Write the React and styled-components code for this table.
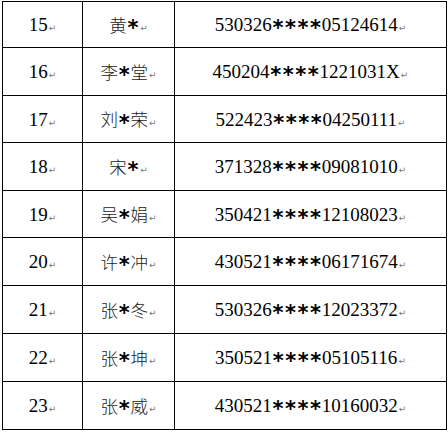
import styled, { createGlobalStyle } from "styled-components";

const GlobalStyle = createGlobalStyle`
  html, body {
    margin: 0;
    padding: 0;
    background: #ffffff;
  }
`;

const rows = [
  { no: "15", name: ["黄", ""], pre: "530326", post: "05124614", h: 46 },
  { no: "16", name: ["李", "堂"], pre: "450204", post: "1221031X", h: 48 },
  { no: "17", name: ["刘", "荣"], pre: "522423", post: "04250111", h: 47 },
  { no: "18", name: ["宋", ""], pre: "371328", post: "09081010", h: 48 },
  { no: "19", name: ["吴", "娟"], pre: "350421", post: "12108023", h: 47 },
  { no: "20", name: ["许", "冲"], pre: "430521", post: "06171674", h: 48 },
  { no: "21", name: ["张", "冬"], pre: "530326", post: "12023372", h: 48 },
  { no: "22", name: ["张", "坤"], pre: "350521", post: "05105116", h: 48 },
  { no: "23", name: ["张", "威"], pre: "430521", post: "10160032", h: 48 },
];

const Stars = ({ n }) =>
  Array.from({ length: n }, (_, i) => <Star key={i}>*</Star>);

function App() {
  return (
    <>
      <GlobalStyle />
      <Table>
        {rows.map(r => (
          <Row key={r.no} style={{ height: r.h }}>
            <Cell>
              <Digits>{r.no}</Digits>
              <Mark>↵</Mark>
            </Cell>
            <Cell>
              <Han>{r.name[0]}</Han>
              <Stars n={1} />
              <Han>{r.name[1]}</Han>
              <Mark>↵</Mark>
            </Cell>
            <Cell>
              <Digits>{r.pre}</Digits>
              <Stars n={4} />
              <Digits>{r.post}</Digits>
              <Mark>↵</Mark>
            </Cell>
          </Row>
        ))}
      </Table>
    </>
  );
}
export default App;

const Table = styled.div`
  width: 445px;
  margin: 1px 0 0 2px;
  border-top: 1px solid #000;
  border-left: 1px solid #000;
  box-sizing: border-box;
`;

const Row = styled.div`
  display: grid;
  grid-template-columns: 80px 92px 272px;
`;

const Cell = styled.div`
  box-sizing: border-box;
  border-right: 1px solid #000;
  border-bottom: 1px solid #000;
  display: flex;
  align-items: center;
  justify-content: center;
  white-space: nowrap;
  color: #000;
`;

const Digits = styled.span`
  font-family: "Liberation Serif", "Times New Roman", serif;
  font-size: 19px;
  line-height: 1;
`;

const Han = styled.span`
  font-family: "Noto Sans CJK SC", sans-serif;
  font-size: 17.5px;
  font-weight: 300;
  line-height: 1;
  color: #1a1a1a;
`;

const Star = styled.span`
  display: inline-block;
  width: 12.5px;
  text-align: center;
  font-family: "DejaVu Sans", sans-serif;
  font-size: 21px;
  font-weight: bold;
  line-height: 1;
  position: relative;
  top: 4px;
`;

const Mark = styled.span`
  font-family: "DejaVu Sans", sans-serif;
  font-size: 9px;
  color: #7a7a7a;
  line-height: 1;
  margin-top: 8px;
  margin-left: 1px;
`;
